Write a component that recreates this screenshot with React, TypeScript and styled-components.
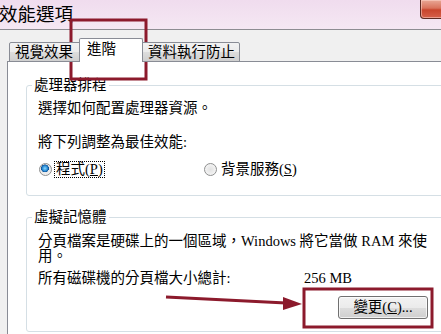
import React from 'react';
import styled, { createGlobalStyle } from 'styled-components';

const FONT = `"Liberation Serif", "Noto Sans CJK TC", serif`;

const Global = createGlobalStyle`
  html, body { margin: 0; padding: 0; background: #f0f0f0; overflow: hidden; }
  #root { width: 441px; height: 334px; }
`;

const Window = styled.div`
  position: relative;
  width: 441px;
  height: 334px;
  overflow: hidden;
  background: #f0f0f0;
  display: flex;
  flex-direction: column;
  font-family: ${FONT};
  font-size: 14.5px;
  line-height: 15px;
  color: #000;
`;

const TitleBar = styled.div`
  height: 29px;
  flex: none;
  display: flex;
  justify-content: space-between;
  align-items: flex-start;
  background: linear-gradient(180deg, #f0dcee 0%, #f3e3f1 60%, #f5e8f3 100%);
  border-bottom: 1px solid #8d8d92;
`;

const Title = styled.div`
  font-family: "Noto Sans CJK TC", sans-serif;
  font-size: 18.5px;
  line-height: 19px;
  font-weight: 400;
  margin: 4px 0 0 -1px;
`;

const CloseButton = styled.div`
  width: 22px;
  height: 18px;
  margin-right: -3px;
  border: 1px solid #5c2a22;
  border-top: none;
  border-radius: 0 0 0 4px;
  background: linear-gradient(180deg, #e9a896 0%, #d9735c 45%, #c8452c 55%, #d5604a 100%);
  box-shadow: inset 0 0 0 1px rgba(255, 220, 210, 0.5);
`;

const Body = styled.div`
  flex: 1;
  display: flex;
  flex-direction: column;
  padding: 8px 0 0 7px;
  min-height: 0;
`;

const TabRow = styled.div`
  display: flex;
  align-items: flex-end;
  margin-left: 2px;
  height: 24px;
  margin-bottom: -1px;
  position: relative;
  z-index: 1;
`;

const Tab = styled.div<{ $active?: boolean; $w: number; $pad: number }>`
  box-sizing: border-box;
  width: ${(p) => p.$w}px;
  height: ${(p) => (p.$active ? 24 : 20)}px;
  padding: ${(p) => (p.$active ? 3 : 2)}px 0 0 ${(p) => p.$pad}px;
  margin: 0 ${(p) => (p.$active ? -2 : 0)}px;
  border: 1px solid #898c95;
  border-bottom: ${(p) => (p.$active ? 'none' : '1px solid #898c95')};
  border-radius: 2px 2px 0 0;
  background: ${(p) =>
    p.$active ? '#ffffff' : 'linear-gradient(180deg, #f2f2f2 0%, #ebebeb 50%, #dddddd 51%, #cfcfcf 100%)'};
  position: relative;
  z-index: ${(p) => (p.$active ? 2 : 0)};
  white-space: nowrap;
  overflow: hidden;
`;

const Panel = styled.div`
  flex: 1;
  width: 460px;
  background: #ffffff;
  border-top: 1px solid #898c95;
  border-left: 1px solid #898c95;
  padding: 16px 0 0 18px;
  display: flex;
  flex-direction: column;
`;

const Group = styled.fieldset<{ $gap?: number; $bottom: number }>`
  margin: ${(p) => p.$gap ?? 0}px 0 0 0;
  padding: 0 0 ${(p) => p.$bottom}px 5px;
  border: 1px solid #d5dfe5;
  border-radius: 3px;
  width: 430px;
  min-width: 0;
`;

const Legend = styled.legend`
  padding: 0 2px;
  line-height: 15px;
  color: #000;
`;

const Content = styled.div`
  padding-left: 6px;
  display: flex;
  flex-direction: column;
`;

const Line = styled.div<{ $mt: number }>`
  margin-top: ${(p) => p.$mt}px;
  white-space: nowrap;
  line-height: 15px;
  height: 15px;
`;

const Paragraph = styled.div<{ $mt: number }>`
  margin-top: ${(p) => p.$mt}px;
  display: flex;
  flex-direction: column;
`;

const ParaLine = styled.span`
  display: block;
  white-space: nowrap;
  line-height: 15px;
  height: 15px;
`;

const RadioRow = styled.div`
  margin-top: 12px;
  display: flex;
  align-items: center;
  height: 15px;
`;

const RadioOption = styled.div<{ $w?: number }>`
  display: flex;
  align-items: center;
  width: ${(p) => (p.$w ? `${p.$w}px` : 'auto')};
`;

const RadioCircle = styled.span<{ $checked?: boolean }>`
  box-sizing: border-box;
  width: 13px;
  height: 13px;
  margin-left: 1px;
  border-radius: 50%;
  border: 1px solid #8e8f8f;
  background: ${(p) =>
    p.$checked
      ? 'radial-gradient(circle at 45% 40%, #8fd7ff 0%, #2c8fd6 28%, #0d4e95 42%, #e9e9e9 46%, #f6f6f6 100%)'
      : 'radial-gradient(circle at 50% 50%, #e2e2e2 0%, #eeeeee 50%, #fbfbfb 100%)'};
  flex: none;
`;

const RadioLabel = styled.span<{ $focus?: boolean }>`
  margin-left: 3px;
  padding: 0 1px;
  height: 15px;
  line-height: 15px;
  outline: ${(p) => (p.$focus ? '1px dotted #000' : 'none')};
  outline-offset: 0;
  white-space: nowrap;
`;

const StatRow = styled.div`
  margin-top: 7px;
  display: grid;
  grid-template-columns: 266px auto;
  white-space: nowrap;
  line-height: 15px;
`;

const ButtonRow = styled.div`
  margin-top: 10px;
  padding-left: 300px;
  display: flex;
`;

const Button = styled.button`
  box-sizing: border-box;
  width: 90px;
  height: 23px;
  padding: 0;
  font-family: ${FONT};
  font-size: 14.5px;
  line-height: 15px;
  color: #000;
  border: 1px solid #707070;
  border-radius: 3px;
  background: linear-gradient(180deg, #f2f2f2 0%, #ebebeb 50%, #dddddd 51%, #cfcfcf 100%);
  box-shadow: inset 0 0 0 1px rgba(255, 255, 255, 0.7);
`;

const Overlay = styled.svg`
  position: absolute;
  left: 0;
  top: 0;
  pointer-events: none;
`;

const RED = '#8c1a2c';

export default function App() {
  return (
    <>
      <Global />
      <Window>
        <TitleBar>
          <Title>效能選項</Title>
          <CloseButton />
        </TitleBar>
        <Body>
          <TabRow>
            <Tab $w={72} $pad={5}>視覺效果</Tab>
            <Tab $active $w={64} $pad={7}>進階</Tab>
            <Tab $w={99} $pad={6}>資料執行防止</Tab>
          </TabRow>
          <Panel>
            <Group $bottom={18}>
              <Legend>處理器排程</Legend>
              <Content>
                <Line $mt={8}>選擇如何配置處理器資源。</Line>
                <Line $mt={19}>將下列調整為最佳效能:</Line>
                <RadioRow>
                  <RadioOption $w={165}>
                    <RadioCircle $checked />
                    <RadioLabel $focus>
                      程式(<u>P</u>)
                    </RadioLabel>
                  </RadioOption>
                  <RadioOption>
                    <RadioCircle />
                    <RadioLabel>
                      背景服務(<u>S</u>)
                    </RadioLabel>
                  </RadioOption>
                </RadioRow>
              </Content>
            </Group>
            <Group $gap={14} $bottom={12}>
              <Legend>虛擬記憶體</Legend>
              <Content>
                <Paragraph $mt={9}>
                  <ParaLine>分頁檔案是硬碟上的一個區域，Windows 將它當做 RAM 來使</ParaLine>
                  <ParaLine>用。</ParaLine>
                </Paragraph>
                <StatRow>
                  <span>所有磁碟機的分頁檔大小總計:</span>
                  <span>256 MB</span>
                </StatRow>
                <ButtonRow>
                  <Button>
                    變更(<u>C</u>)...
                  </Button>
                </ButtonRow>
              </Content>
            </Group>
          </Panel>
        </Body>
        <Overlay width={441} height={334} viewBox="0 0 441 334">
          <rect x={71} y={20} width={75} height={59} fill="none" stroke={RED} strokeWidth={3} />
          <rect x={304} y={289} width={128} height={38} fill="none" stroke={RED} strokeWidth={3} />
          <line x1={166} y1={297} x2={286} y2={303} stroke={RED} strokeWidth={3} />
          <polygon points="283,297 302,304 283,310" fill={RED} />
        </Overlay>
      </Window>
    </>
  );
}
